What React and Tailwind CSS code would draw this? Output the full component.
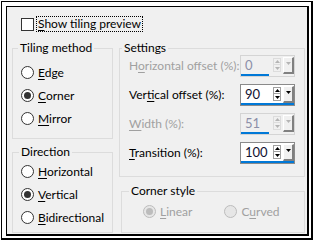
import React from "react";

const font = { fontFamily: 'Lato, "Noto Sans", sans-serif' };

function Key({ children }) {
  return <span className="underline underline-offset-[2px] decoration-[1px]">{children}</span>;
}

function Radio({ checked, disabled, label }) {
  return (
    <div className="flex h-[23px] items-center whitespace-nowrap">
      <span
        className={
          "flex h-[13px] w-[13px] items-center justify-center rounded-full border " +
          (disabled ? "border-[#bcbcbc] bg-[#e6e6e6]" : "border-[#333] bg-white")
        }
      >
        {checked && (
          <span
            className={
              "h-[7px] w-[7px] rounded-full " + (disabled ? "bg-[#bcbcbc]" : "bg-[#333]")
            }
          />
        )}
      </span>
      <span className={"ml-[4px] " + (disabled ? "text-[#a0a0a0]" : "text-black")}>{label}</span>
    </div>
  );
}

function Arrow({ up, color }) {
  return (
    <svg width="5" height="3" viewBox="0 0 5 3">
      <path d={up ? "M0 3 L2.5 0 L5 3 Z" : "M0 0 L2.5 3 L5 0 Z"} fill={color} />
    </svg>
  );
}

function NumberBox({ value, disabled }) {
  const c = disabled ? "#b4b4b4" : "#000";
  return (
    <div
      className={
        "flex h-[22px] w-[55px] shrink-0 flex-col border " +
        (disabled ? "border-[#d4d4d4] bg-[#f0f0f0]" : "border-[#8a8a8a] bg-white")
      }
    >
      <div className="flex flex-1 items-center">
        <span className={"ml-[4px] w-[28px] text-[13px] " + (disabled ? "text-[#8c8fa8]" : "text-[#101030]")}>
          {value}
        </span>
        <div className="flex flex-col">
          <div className={"flex h-[7px] w-[8px] items-center justify-center border " + (disabled ? "border-[#dcdcdc]" : "border-[#a0a0a0]")}>
            <Arrow up color={c} />
          </div>
          <div className={"flex h-[7px] w-[8px] items-center justify-center border border-t-0 " + (disabled ? "border-[#dcdcdc]" : "border-[#a0a0a0]")}>
            <Arrow color={c} />
          </div>
        </div>
        <div className="ml-[2px] flex h-[17px] w-[11px] justify-center border-l border-t border-r-2 border-b-2 border-l-white border-t-white border-r-[#808080] border-b-[#808080] bg-[#f0f0f0] pt-[4px]">
          <Arrow color={disabled ? "#b4b4b4" : "#000"} />
        </div>
      </div>
      <div className={"h-[2px] bg-[#0078d7] " + (disabled ? "w-[28px]" : "w-full")} />
    </div>
  );
}

function Row({ label, value, disabled }) {
  return (
    <div className="flex h-[22px] items-center justify-between whitespace-nowrap">
      <span className={disabled ? "text-[#a0a0a0]" : "text-black"}>{label}</span>
      <NumberBox value={value} disabled={disabled} />
    </div>
  );
}

export default function App() {
  return (
    <div className="h-[241px] w-[314px] bg-white pl-[1px] pt-[1px] text-[12px] leading-[16px]" style={font}>
      <div className="h-[239px] w-[312px] border-l border-t border-r-2 border-b-2 border-black bg-white pl-[4px] pt-[4px] pr-[2px] pb-[2px]">
        <div className="h-full w-full border-l border-t border-r-2 border-b-2 border-black bg-[#f0f0f0]">
          <div className="ml-[14px] mt-[9px] flex h-[16px] items-center whitespace-nowrap">
            <span className="h-[13px] w-[13px] border border-[#333] bg-white" />
            <span className="ml-[2px] border border-dotted border-black px-[1px] leading-[14px]">
              <Key>S</Key>how tiling preview
            </span>
          </div>

          <div className="mt-[8px] ml-[5px] flex gap-[6px]">
            <div className="flex w-[101px] flex-col gap-[5px]">
              <fieldset className="h-[99px] border border-[#dcdcdc] pl-[8px]">
                <legend className="-ml-[3px] px-[2px]">Tiling method</legend>
                <div className="mt-[5px]">
                  <Radio label={<><Key>E</Key>dge</>} />
                  <Radio checked label={<><Key>C</Key>orner</>} />
                  <Radio label={<><Key>M</Key>irror</>} />
                </div>
              </fieldset>
              <fieldset className="h-[89px] border border-[#dcdcdc] pl-[8px]">
                <legend className="-ml-[2px] px-[2px]">Direction</legend>
                <Radio label={<><Key>H</Key>orizontal</>} />
                <Radio checked label={<><Key>V</Key>ertical</>} />
                <Radio label={<><Key>B</Key>idirectional</>} />
              </fieldset>
            </div>

            <div className="flex w-[186px] flex-col gap-[6px]">
              <fieldset className="h-[137px] border border-[#dcdcdc] pl-[9px] pr-[9px]">
                <legend className="-ml-[7px] px-[2px]">Settings</legend>
                <div className="-mt-[1px] flex flex-col gap-[7px]">
                  <Row disabled value="0" label={<>H<Key>o</Key>rizontal offset (%):</>} />
                  <Row value="90" label={<>Ver<Key>t</Key>ical offset (%):</>} />
                  <Row disabled value="51" label={<><Key>W</Key>idth (%):</>} />
                  <Row value="100" label={<><Key>T</Key>ransition (%):</>} />
                </div>
              </fieldset>
              <fieldset className="ml-[2px] h-[50px] border border-[#dcdcdc] pl-[21px]">
                <legend className="-ml-[14px] px-[2px]">Corner style</legend>
                <div className="mt-[1px] flex gap-[32px]">
                  <Radio disabled checked label={<><Key>L</Key>inear</>} />
                  <Radio disabled label={<>C<Key>u</Key>rved</>} />
                </div>
              </fieldset>
            </div>
          </div>
        </div>
      </div>
    </div>
  );
}
